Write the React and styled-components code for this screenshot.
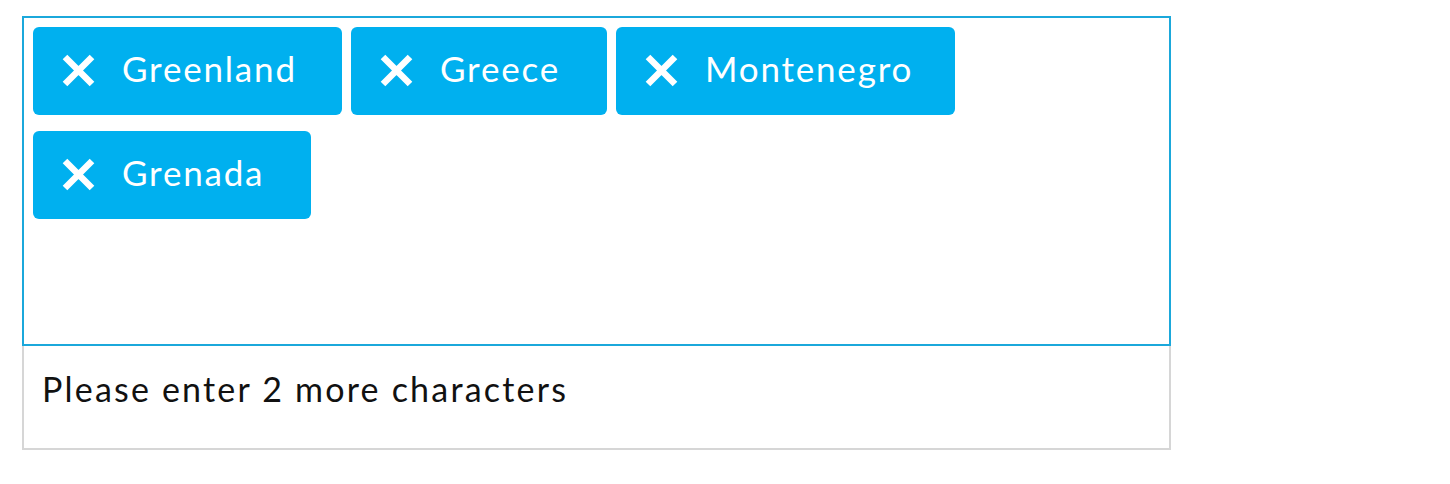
import React from 'react';
import styled, { createGlobalStyle } from 'styled-components';

const GlobalStyle = createGlobalStyle`
  body {
    margin: 0;
    background: #fff;
    font-family: Lato, "Open Sans", sans-serif;
  }
`;

const Page = styled.div`
  padding: 16px 0 0 22px;
`;

const Field = styled.div`
  width: 1149px;
`;

const TagBox = styled.div`
  box-sizing: border-box;
  height: 330px;
  border: 2px solid #1ba8db;
  padding: 9px;
  display: flex;
  flex-wrap: wrap;
  align-content: flex-start;
  gap: 16px 9px;
  position: relative;
  z-index: 1;
`;

const Tag = styled.div`
  box-sizing: border-box;
  height: 88px;
  width: ${(p) => p.w}px;
  background: #00b0ef;
  border-radius: 6px;
  display: flex;
  align-items: center;
  padding: 0 0 6px 27px;
  color: #fff;
  font-size: 35px;
`;

const Remove = styled.svg`
  width: 35px;
  height: 35px;
  margin: 6px 27px 0 0;
  flex-shrink: 0;
`;

const Label = styled.span`
  line-height: 1;
  letter-spacing: 1.8px;
`;

const Message = styled.div`
  box-sizing: border-box;
  height: 106px;
  margin-top: -2px;
  border: 2px solid #d6d6d6;
  padding: 22px 18px 0;
  font-size: 34px;
  letter-spacing: 2.2px;
  color: #111;
`;

const tags = [
  { name: 'Greenland', w: 309 },
  { name: 'Greece', w: 256 },
  { name: 'Montenegro', w: 339 },
  { name: 'Grenada', w: 278 },
];

const XIcon = () => (
  <Remove viewBox="0 0 35 35">
    <path d="M5 3 L32 30 M32 3 L5 30" stroke="#fff" strokeWidth="6.5" fill="none" />
  </Remove>
);

export default function App() {
  return (
    <>
      <GlobalStyle />
      <Page>
        <Field>
          <TagBox>
            {tags.map((t) => (
              <Tag key={t.name} w={t.w}>
                <XIcon />
                <Label>{t.name}</Label>
              </Tag>
            ))}
          </TagBox>
          <Message>Please enter 2 more characters</Message>
        </Field>
      </Page>
    </>
  );
}
